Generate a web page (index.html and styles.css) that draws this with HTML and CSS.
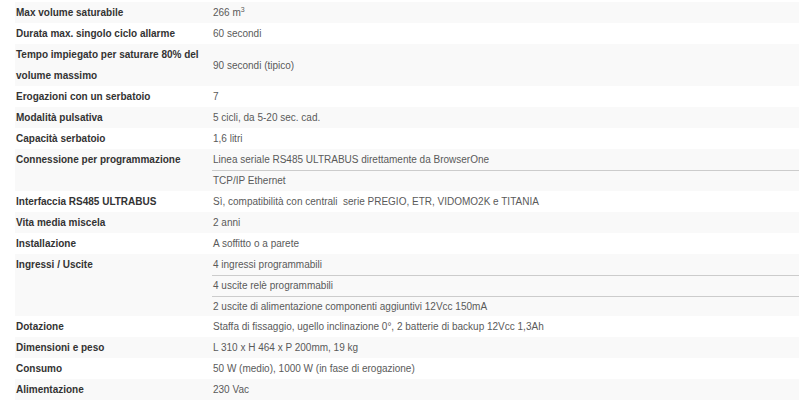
FILE: index.html
```html
<!DOCTYPE html>
<html lang="it">
<head>
    <meta charset="UTF-8">
    <meta name="viewport" content="width=device-width, initial-scale=1.0">
    <title>Caratteristiche tecniche</title>
    <link rel="stylesheet" href="styles.css">
</head>
<body>
    <table class="specs">
        <tbody>
            <tr><th>Max volume saturabile</th><td>266 m<sup>3</sup></td></tr>
        </tbody>
        <tbody>
            <tr><th>Durata max. singolo ciclo allarme</th><td>60 secondi</td></tr>
        </tbody>
        <tbody>
            <tr><th>Tempo impiegato per saturare 80% del volume massimo</th><td>90 secondi (tipico)</td></tr>
        </tbody>
        <tbody>
            <tr><th>Erogazioni con un serbatoio</th><td>7</td></tr>
        </tbody>
        <tbody>
            <tr><th>Modalità pulsativa</th><td>5 cicli, da 5-20 sec. cad.</td></tr>
        </tbody>
        <tbody>
            <tr><th>Capacità serbatoio</th><td>1,6 litri</td></tr>
        </tbody>
        <tbody>
            <tr><th rowspan="2">Connessione per programmazione</th><td>Linea seriale RS485 ULTRABUS direttamente da BrowserOne</td></tr>
            <tr><td class="sub">TCP/IP Ethernet</td></tr>
        </tbody>
        <tbody>
            <tr><th>Interfaccia RS485 ULTRABUS</th><td>Sì, compatibilità con centrali&nbsp; serie PREGIO, ETR, VIDOMO2K e TITANIA</td></tr>
        </tbody>
        <tbody>
            <tr><th>Vita media miscela</th><td>2 anni</td></tr>
        </tbody>
        <tbody>
            <tr><th>Installazione</th><td>A soffitto o a parete</td></tr>
        </tbody>
        <tbody>
            <tr><th rowspan="3">Ingressi / Uscite</th><td>4 ingressi programmabili</td></tr>
            <tr><td class="sub">4 uscite relè programmabili</td></tr>
            <tr><td class="sub">2 uscite di alimentazione componenti aggiuntivi 12Vcc 150mA</td></tr>
        </tbody>
        <tbody>
            <tr><th>Dotazione</th><td>Staffa di fissaggio, ugello inclinazione 0°, 2 batterie di backup 12Vcc 1,3Ah</td></tr>
        </tbody>
        <tbody>
            <tr><th>Dimensioni e peso</th><td>L 310 x H 464 x P 200mm, 19 kg</td></tr>
        </tbody>
        <tbody>
            <tr><th>Consumo</th><td>50 W (medio), 1000 W (in fase di erogazione)</td></tr>
        </tbody>
        <tbody>
            <tr><th>Alimentazione</th><td>230 Vac</td></tr>
        </tbody>
    </table>
</body>
</html>
```

FILE: styles.css
```css
* {
    margin: 0;
    padding: 0;
    box-sizing: border-box;
}

body {
    background: #fff;
    font-family: 'Liberation Sans', Arial, sans-serif;
    font-size: 10px;
    color: #5a5a5a;
}

.specs {
    margin: 2px 1px 0 15px;
    width: calc(100% - 16px);
    border-collapse: collapse;
}

.specs tbody:nth-of-type(odd) {
    background: #f9f9f9;
}

.specs th,
.specs td {
    height: 21px;
    line-height: 21px;
    padding: 0 0 0 1px;
    text-align: left;
    vertical-align: middle;
}

.specs th {
    width: 197px;
    padding-right: 12px;
    font-weight: bold;
    color: #333;
    vertical-align: top;
}

.specs tr:only-child th {
    vertical-align: middle;
}

.specs td.sub {
    height: 20px;
    line-height: 20px;
    border-top: 1px solid #ccc;
}

/* last line of a three-line group is a bit tighter */
.specs tr:nth-child(3) td.sub {
    height: 19px;
    line-height: 19px;
}

.specs sup {
    font-size: 7px;
    line-height: 0;
    vertical-align: 4px;
}
```
